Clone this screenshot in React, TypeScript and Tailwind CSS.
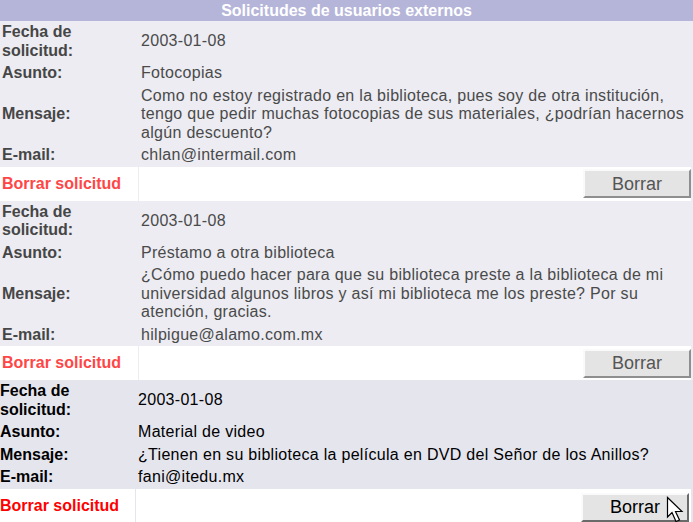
import React from "react";

type Solicitud = {
  fecha: string;
  asunto: string;
  mensaje: string;
  email: string;
};

const solicitudes: Solicitud[] = [
  {
    fecha: "2003-01-08",
    asunto: "Fotocopias",
    mensaje:
      "Como no estoy registrado en la biblioteca, pues soy de otra institución, tengo que pedir muchas fotocopias de sus materiales, ¿podrían hacernos algún descuento?",
    email: "chlan@intermail.com",
  },
  {
    fecha: "2003-01-08",
    asunto: "Préstamo a otra biblioteca",
    mensaje:
      "¿Cómo puedo hacer para que su biblioteca preste a la biblioteca de mi universidad algunos libros y así mi biblioteca me los preste? Por su atención, gracias.",
    email: "hilpigue@alamo.com.mx",
  },
  {
    fecha: "2003-01-08",
    asunto: "Material de video",
    mensaje: "¿Tienen en su biblioteca la película en DVD del Señor de los Anillos?",
    email: "fani@itedu.mx",
  },
];

function Cursor() {
  return (
    <svg
      className="absolute right-[1px] top-[1px]"
      width="20"
      height="28"
      viewBox="0 0 20 28"
    >
      <path
        d="M1.5 1.5 L1.5 21 L6 16.5 L10 25.5 L13.5 24 L9.5 15.5 L16 15.5 Z"
        fill="white"
        stroke="black"
        strokeWidth="1.2"
        strokeLinejoin="miter"
      />
    </svg>
  );
}

function Registro({ s, faded, last }: { s: Solicitud; faded: boolean; last: boolean }) {
  const bg = faded ? "bg-[#ececf2]" : "bg-[#e5e5ee]";
  const label = faded
    ? "w-[138px] pl-[2px] text-[#464646]"
    : "w-[135px] pl-0 text-black";
  const value = faded ? "text-[#4a4a4a]" : "text-black";

  const rows: [string, React.ReactNode][] = [
    ["Fecha de solicitud:", s.fecha],
    ["Asunto:", s.asunto],
    ["Mensaje:", s.mensaje],
    ["E-mail:", s.email],
  ];

  return (
    <div className={bg}>
      {rows.map(([l, v]) => (
        <div key={l} className="flex">
          <div className={`${label} shrink-0 py-[2px] flex items-center font-bold leading-[18.5px]`}>
            {l}
          </div>
          <div
            className={`${value} flex-1 pl-[3px] pr-[4px] py-[2px] flex items-center leading-[18.5px] tracking-[0.3px]`}
          >
            {v}
          </div>
        </div>
      ))}
      {/* fila de borrar */}
      <div className="flex h-[34px] gap-px pr-[2px]">
        <div
          className={`${faded ? "w-[138px] pl-[2px] text-[#ff4646]" : "w-[135px] text-[#ff0000]"} shrink-0 bg-white flex items-center font-bold`}
        >
          Borrar solicitud
        </div>
        <div className="flex-1 bg-white flex items-center justify-end">
          <button
            className={`relative w-[108px] h-[29px] bg-[#e4e4e4] border-t-2 border-l-2 border-[#fafafa] border-b-2 border-r-2 text-[18px] leading-none ${
              faded
                ? "border-b-[#8e8e8e] border-r-[#8e8e8e] text-[#555]"
                : "border-b-[#6a6a6a] border-r-[#6a6a6a] text-black mr-[2px] mt-[3px]"
            }`}
          >
            Borrar
            {last && <Cursor />}
          </button>
        </div>
      </div>
    </div>
  );
}

export default function App() {
  return (
    <div
      className="w-[693px] h-[522px] overflow-hidden bg-white text-[16px]"
      style={{ fontFamily: '"Liberation Sans", Arial, sans-serif' }}
    >
      <div className="h-[21px] bg-[#b5b5d9] text-white font-bold text-[16px] leading-[21px] text-center">
        Solicitudes de usuarios externos
      </div>
      {solicitudes.map((s, i) => (
        <Registro key={i} s={s} faded={i < 2} last={i === 2} />
      ))}
    </div>
  );
}
